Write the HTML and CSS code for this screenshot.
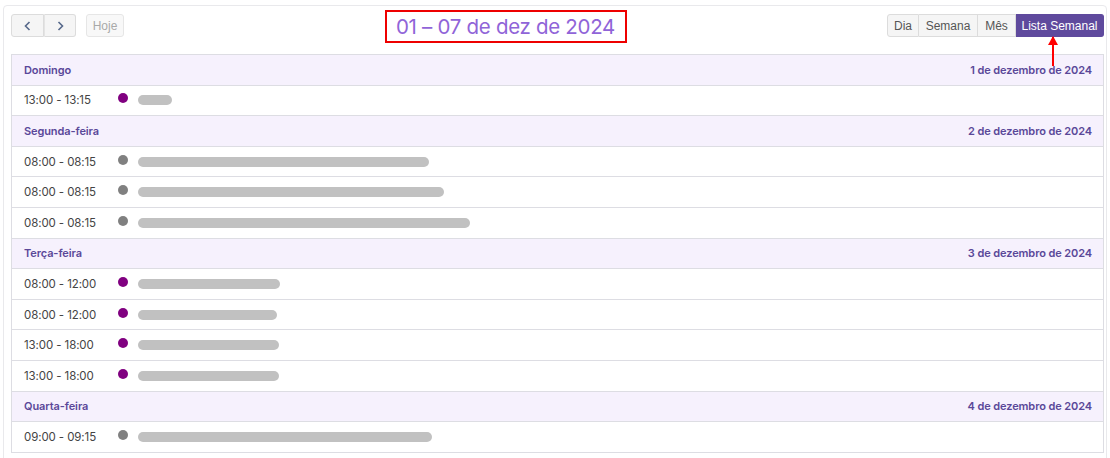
FILE: index.html
```html
<!DOCTYPE html>
<html lang="pt">
<head>
<meta charset="utf-8">
<link rel="stylesheet" href="styles.css">
</head>
<body>
<div class="card">
  <div class="toolbar">
    <div class="left">
      <div class="group">
        <button class="btn icon"><svg width="12" height="12" viewBox="0 0 12 12"><path d="M7.5 2 L3.5 6 L7.5 10" fill="none" stroke="#56688a" stroke-width="1.6"/></svg></button>
        <button class="btn icon"><svg width="12" height="12" viewBox="0 0 12 12"><path d="M4.5 2 L8.5 6 L4.5 10" fill="none" stroke="#56688a" stroke-width="1.6"/></svg></button>
      </div>
      <button class="btn today">Hoje</button>
    </div>
    <div class="title">01 – 07 de dez de 2024</div>
    <div class="group views">
      <button class="btn">Dia</button>
      <button class="btn">Semana</button>
      <button class="btn">Mês</button>
      <button class="btn active">Lista Semanal</button>
    </div>
    <div class="arrow"></div>
  </div>
  <div class="list">
    <div class="day"><span>Domingo</span><span>1 de dezembro de 2024</span></div>
    <div class="ev"><span class="time">13:00 - 13:15</span><span class="dot purple"></span><span class="bar" style="width:34px"></span></div>
    <div class="day"><span>Segunda-feira</span><span>2 de dezembro de 2024</span></div>
    <div class="ev"><span class="time">08:00 - 08:15</span><span class="dot gray"></span><span class="bar" style="width:291px"></span></div>
    <div class="ev"><span class="time">08:00 - 08:15</span><span class="dot gray"></span><span class="bar" style="width:306px"></span></div>
    <div class="ev"><span class="time">08:00 - 08:15</span><span class="dot gray"></span><span class="bar" style="width:332px"></span></div>
    <div class="day"><span>Terça-feira</span><span>3 de dezembro de 2024</span></div>
    <div class="ev"><span class="time">08:00 - 12:00</span><span class="dot purple"></span><span class="bar" style="width:142px"></span></div>
    <div class="ev"><span class="time">08:00 - 12:00</span><span class="dot purple"></span><span class="bar" style="width:139px"></span></div>
    <div class="ev"><span class="time">13:00 - 18:00</span><span class="dot purple"></span><span class="bar" style="width:141px"></span></div>
    <div class="ev"><span class="time">13:00 - 18:00</span><span class="dot purple"></span><span class="bar" style="width:141px"></span></div>
    <div class="day"><span>Quarta-feira</span><span>4 de dezembro de 2024</span></div>
    <div class="ev"><span class="time">09:00 - 09:15</span><span class="dot gray"></span><span class="bar" style="width:294px"></span></div>
  </div>
</div>
</body>
</html>
```
FILE: styles.css
```css
* { box-sizing: border-box; }
html, body { margin: 0; padding: 0; background: #fff; overflow: hidden; }
body { font-family: Inter, "Liberation Sans", sans-serif; }

.card {
  margin: 5px 0 0 3px;
  width: 1104px;
  height: 470px;
  border: 1px solid #e9e9ec;
  border-radius: 4px 4px 0 0;
  padding: 8px 2px 0 7px;
}

.toolbar {
  position: relative;
  display: flex;
  justify-content: space-between;
  align-items: center;
  height: 23px;
  margin-bottom: 17px;
}
.left { display: flex; gap: 10px; }
.group { display: flex; }
.btn {
  font-family: "Liberation Sans", Arial, sans-serif;
  font-size: 12px;
  color: #555;
  background: #f5f5f5;
  border: 1px solid #dcdcdc;
  height: 23px;
  padding: 0 5px;
  margin: 0;
  display: flex;
  align-items: center;
  justify-content: center;
}
.group .btn + .btn { border-left: none; }
.group .btn:first-child { border-radius: 3px 0 0 3px; }
.group .btn:last-child { border-radius: 0 3px 3px 0; }
.btn.icon { width: 33px; padding: 0; }
.btn.icon + .btn.icon { width: 32px; border-left: 1px solid #e4e4e4; }
.btn.today { color: #a9a9a9; background: #f8f8f8; border-color: #e6e6e6; border-radius: 3px; width: 38px; }
.views .btn:nth-child(1) { width: 32px; }
.views .btn:nth-child(2) { width: 59px; }
.views .btn:nth-child(3) { width: 38px; }
.views .btn.active { width: 88px; background: #5f4a9d; border-color: #5f4a9d; color: #fff; }

.title {
  width: 242px;
  height: 33px;
  margin-top: 1px;
  border: 2px solid #ee0000;
  color: #9064d8;
  font-size: 20.5px;
  font-weight: 400;
  display: flex;
  align-items: center;
  justify-content: center;
  letter-spacing: -0.3px;
}

.arrow {
  position: absolute;
  left: 1041px;
  top: 23px;
  width: 2px;
  height: 29px;
  background: #f00;
}
.arrow::before {
  content: "";
  position: absolute;
  left: -4px;
  top: -1px;
  border-left: 5px solid transparent;
  border-right: 5px solid transparent;
  border-bottom: 9px solid #f00;
}

.list {
  width: 1093px;
  border: 1px solid #dddde3;
  border-bottom: none;
}
.day, .ev {
  height: 30.6px;
  border-bottom: 1px solid #dddde3;
  display: flex;
  align-items: center;
  padding: 0 11px 0 12px;
}
.day {
  background: #f6f1fd;
  justify-content: space-between;
  color: #5a4899;
  font-size: 11px;
  font-weight: 600;
  letter-spacing: -0.1px;
}
.ev { color: #444; font-size: 11.5px; letter-spacing: -0.1px; }
.time { width: 94px; }
.dot {
  width: 10px;
  height: 10px;
  border-radius: 50%;
  transform: translateY(-2px);
}
.dot.purple { background: #800080; }
.dot.gray { background: #808080; }
.bar {
  height: 10px;
  border-radius: 5px;
  background: #c1c1c1;
  margin-left: 10px;
}
```
